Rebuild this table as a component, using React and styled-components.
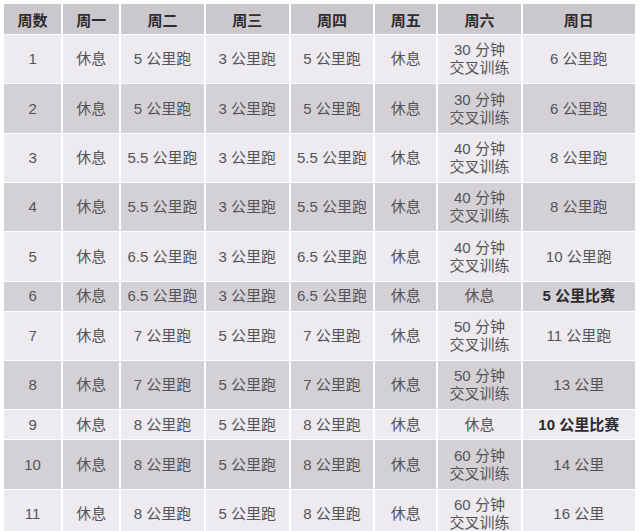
import React from "react";
import styled, { createGlobalStyle } from "styled-components";

const GlobalStyle = createGlobalStyle`
  html, body {
    margin: 0;
    padding: 0;
    background: #ffffff;
  }
  body {
    font-family: "Liberation Sans", "Noto Sans CJK SC", sans-serif;
  }
`;

const Page = styled.div`
  width: 640px;
  height: 531px;
  overflow: hidden;
  padding: 3px 0 0 2px;
  box-sizing: border-box;
`;

const Table = styled.table`
  border-collapse: separate;
  border-spacing: 2px 1px;
  table-layout: fixed;
  width: 635px;
`;

const HeadCell = styled.th`
  height: 30px;
  padding: 0;
  background: #cbc8cd;
  color: #2e2d30;
  font-size: 15px;
  font-weight: bold;
  text-align: center;
  vertical-align: middle;
`;

const Row = styled.tr`
  height: ${(p) => (p.$tall ? "48.35px" : "29px")};
  background: ${(p) => (p.$dark ? "#d4d1d6" : "#edebef")};
`;

const Cell = styled.td`
  padding: 0;
  font-size: 15px;
  line-height: 18px;
  color: ${(p) => (p.$bold ? "#2b2a2d" : "#555458")};
  font-weight: ${(p) => (p.$bold ? "bold" : "normal")};
  text-align: center;
  vertical-align: middle;
  white-space: pre-line;
`;

const widths = [57, 56, 82, 83, 82, 61, 82, 112];
const headers = ["周数", "周一", "周二", "周三", "周四", "周五", "周六", "周日"];

const cross = (m) => `${m} 分钟\n交叉训练`;

const weeks = [
  ["1", "休息", "5 公里跑", "3 公里跑", "5 公里跑", "休息", cross(30), "6 公里跑"],
  ["2", "休息", "5 公里跑", "3 公里跑", "5 公里跑", "休息", cross(30), "6 公里跑"],
  ["3", "休息", "5.5 公里跑", "3 公里跑", "5.5 公里跑", "休息", cross(40), "8 公里跑"],
  ["4", "休息", "5.5 公里跑", "3 公里跑", "5.5 公里跑", "休息", cross(40), "8 公里跑"],
  ["5", "休息", "6.5 公里跑", "3 公里跑", "6.5 公里跑", "休息", cross(40), "10 公里跑"],
  ["6", "休息", "6.5 公里跑", "3 公里跑", "6.5 公里跑", "休息", "休息", "5 公里比赛"],
  ["7", "休息", "7 公里跑", "5 公里跑", "7 公里跑", "休息", cross(50), "11 公里跑"],
  ["8", "休息", "7 公里跑", "5 公里跑", "7 公里跑", "休息", cross(50), "13 公里"],
  ["9", "休息", "8 公里跑", "5 公里跑", "8 公里跑", "休息", "休息", "10 公里比赛"],
  ["10", "休息", "8 公里跑", "5 公里跑", "8 公里跑", "休息", cross(60), "14 公里"],
  ["11", "休息", "8 公里跑", "5 公里跑", "8 公里跑", "休息", cross(60), "16 公里"],
];

function App() {
  return (
    <Page>
      <GlobalStyle />
      <Table>
        <colgroup>
          {widths.map((w, i) => (
            <col key={i} style={{ width: w }} />
          ))}
        </colgroup>
        <thead>
          <tr>
            {headers.map((h) => (
              <HeadCell key={h}>{h}</HeadCell>
            ))}
          </tr>
        </thead>
        <tbody>
          {weeks.map((row, i) => {
            const tall = row.some((c) => c.includes("\n"));
            return (
              <Row key={row[0]} $tall={tall} $dark={i % 2 === 1}>
                {row.map((c, j) => (
                  <Cell key={j} $bold={c.includes("比赛")}>
                    {c}
                  </Cell>
                ))}
              </Row>
            );
          })}
        </tbody>
      </Table>
    </Page>
  );
}

export default App;
